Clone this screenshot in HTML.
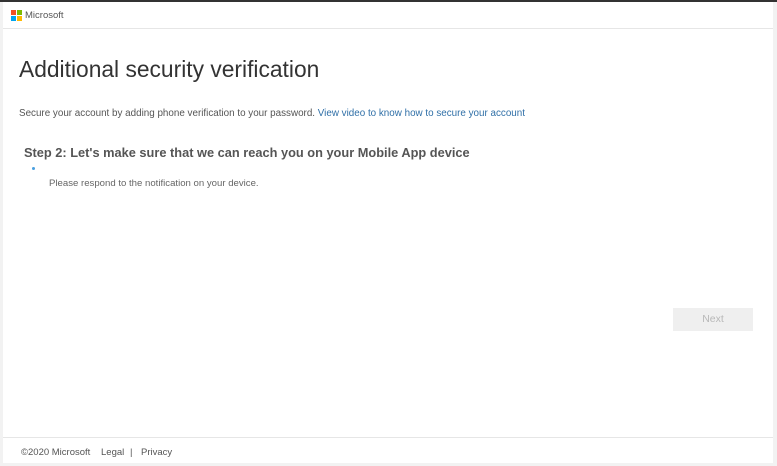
<!DOCTYPE html>
<html><head><meta charset="utf-8"><style>
body{margin:0;width:777px;height:466px;overflow:hidden;background:#f2f2f2;font-family:"Liberation Sans",sans-serif;position:relative}
.frame{position:absolute;left:3px;top:2px;width:770px;height:461px;background:#fff}
.top{position:absolute;left:0;top:0;width:777px;height:2px;background:#333}
.hdr{position:absolute;left:0;top:0;width:770px;height:26px;border-bottom:1px solid #e6e6e6}
.logo{position:absolute;left:8px;top:8px;width:11px;height:11px}
.logo i{position:absolute;width:5px;height:5px}
.ms{position:absolute;left:22px;top:8px;font-size:9.5px;color:#555}
h1{position:absolute;left:16px;top:54px;margin:0;font-weight:normal;font-size:22.8px;color:#333}
.p1{position:absolute;left:16px;top:106px;font-size:9.85px;color:#555}
.p1 a{color:#2f6fa7;text-decoration:none}
.h2{position:absolute;left:21px;top:143px;font-size:12.8px;font-weight:bold;color:#555}
.dot{position:absolute;left:29px;top:165px;width:3px;height:3px;background:#4aa0e0;border-radius:50%}
.p2{position:absolute;left:46px;top:176px;font-size:9.6px;color:#666}
.btn{position:absolute;left:670px;top:306px;width:80px;height:23px;background:#efefef;color:#b8b8b8;font-size:10.5px;text-align:center;line-height:23px}
.ft{position:absolute;left:0;top:435px;width:770px;height:26px;border-top:1px solid #e6e6e6;font-size:9.5px;color:#555}
.ft span{position:absolute;top:9px}
</style></head><body>
<div class="top"></div>
<div class="frame">
<div class="hdr">
<div class="logo"><i style="left:0;top:0;background:#f25022"></i><i style="left:6px;top:0;background:#7fba00"></i><i style="left:0;top:6px;background:#00a4ef"></i><i style="left:6px;top:6px;background:#ffb900"></i></div>
<div class="ms">Microsoft</div>
</div>
<h1>Additional security verification</h1>
<div class="p1">Secure your account by adding phone verification to your password. <a>View video to know how to secure your account</a></div>
<div class="h2">Step 2: Let's make sure that we can reach you on your Mobile App device</div>
<div class="dot"></div>
<div class="p2">Please respond to the notification on your device.</div>
<div class="btn">Next</div>
<div class="ft"><span style="left:18px">©2020 Microsoft</span><span style="left:98px">Legal</span><span style="left:127px">|</span><span style="left:138px">Privacy</span></div>
</div>
</body></html>
